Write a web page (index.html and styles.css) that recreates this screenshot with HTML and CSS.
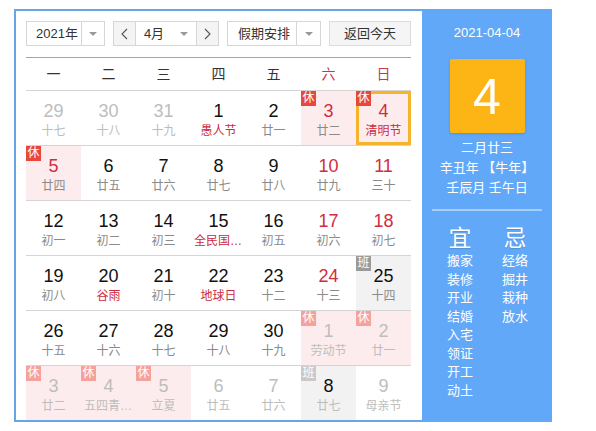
FILE: index.html
```html
<!DOCTYPE html>
<html lang="zh">
<head>
<meta charset="utf-8">
<link rel="stylesheet" href="styles.css">
</head>
<body>
<div class="widget">
  <div class="main">
    <div class="toolbar">
      <div class="sel year"><span class="txt">2021年</span><span class="arr"><i></i></span></div>
      <div class="sel month">
        <span class="nav"><svg width="7" height="12" viewBox="0 0 7 12"><polyline points="6,1 1,6 6,11" fill="none" stroke="#555" stroke-width="1.1"/></svg></span>
        <span class="txt">4月</span>
        <span class="arr plain"><i></i></span>
        <span class="nav r"><svg width="7" height="12" viewBox="0 0 7 12"><polyline points="1,1 6,6 1,11" fill="none" stroke="#555" stroke-width="1.1"/></svg></span>
      </div>
      <div class="sel hol"><span class="txt">假期安排</span><span class="arr"><i></i></span></div>
      <div class="btn">返回今天</div>
    </div>
    <div class="rule"></div>
    <div class="week">
      <span>一</span><span>二</span><span>三</span><span>四</span><span>五</span><span class="we">六</span><span class="we">日</span>
    </div>
    <div class="row">
      <div class="c off"><b>29</b><em>十七</em></div>
      <div class="c off"><b>30</b><em>十八</em></div>
      <div class="c off"><b>31</b><em>十九</em></div>
      <div class="c fest"><b>1</b><em>愚人节</em></div>
      <div class="c"><b>2</b><em>廿一</em></div>
      <div class="c hd red"><span class="tag">休</span><b>3</b><em>廿二</em></div>
      <div class="c hd red fest today"><span class="tag">休</span><b>4</b><em>清明节</em></div>
    </div>
    <div class="row">
      <div class="c hd red"><span class="tag">休</span><b>5</b><em>廿四</em></div>
      <div class="c"><b>6</b><em>廿五</em></div>
      <div class="c"><b>7</b><em>廿六</em></div>
      <div class="c"><b>8</b><em>廿七</em></div>
      <div class="c"><b>9</b><em>廿八</em></div>
      <div class="c red"><b>10</b><em>廿九</em></div>
      <div class="c red"><b>11</b><em>三十</em></div>
    </div>
    <div class="row">
      <div class="c"><b>12</b><em>初一</em></div>
      <div class="c"><b>13</b><em>初二</em></div>
      <div class="c"><b>14</b><em>初三</em></div>
      <div class="c fest"><b>15</b><em>全民国家安全教育日</em></div>
      <div class="c"><b>16</b><em>初五</em></div>
      <div class="c red"><b>17</b><em>初六</em></div>
      <div class="c red"><b>18</b><em>初七</em></div>
    </div>
    <div class="row">
      <div class="c"><b>19</b><em>初八</em></div>
      <div class="c fest"><b>20</b><em>谷雨</em></div>
      <div class="c"><b>21</b><em>初十</em></div>
      <div class="c fest"><b>22</b><em>地球日</em></div>
      <div class="c"><b>23</b><em>十二</em></div>
      <div class="c red"><b>24</b><em>十三</em></div>
      <div class="c wk"><span class="tag ban">班</span><b>25</b><em>十四</em></div>
    </div>
    <div class="row">
      <div class="c"><b>26</b><em>十五</em></div>
      <div class="c"><b>27</b><em>十六</em></div>
      <div class="c"><b>28</b><em>十七</em></div>
      <div class="c"><b>29</b><em>十八</em></div>
      <div class="c"><b>30</b><em>十九</em></div>
      <div class="c hd off"><span class="tag">休</span><b>1</b><em>劳动节</em></div>
      <div class="c hd off"><span class="tag">休</span><b>2</b><em>廿一</em></div>
    </div>
    <div class="row last">
      <div class="c hd off"><span class="tag">休</span><b>3</b><em>廿二</em></div>
      <div class="c hd off"><span class="tag">休</span><b>4</b><em>五四青年节</em></div>
      <div class="c hd off"><span class="tag">休</span><b>5</b><em>立夏</em></div>
      <div class="c off"><b>6</b><em>廿五</em></div>
      <div class="c off"><b>7</b><em>廿六</em></div>
      <div class="c wk off dark"><span class="tag ban">班</span><b>8</b><em>廿七</em></div>
      <div class="c off"><b>9</b><em>母亲节</em></div>
    </div>
  </div>
  <div class="panel">
    <div class="pdate">2021-04-04</div>
    <div class="big">4</div>
    <div class="lunar">
      <div>二月廿三</div>
      <div>辛丑年 【牛年】</div>
      <div>壬辰月 壬午日</div>
    </div>
    <div class="divider"></div>
    <div class="yj">
      <div class="col">
        <div class="h">宜</div>
        <div class="it">搬家</div><div class="it">装修</div><div class="it">开业</div><div class="it">结婚</div>
        <div class="it">入宅</div><div class="it">领证</div><div class="it">开工</div><div class="it">动土</div>
      </div>
      <div class="col">
        <div class="h">忌</div>
        <div class="it">经络</div><div class="it">掘井</div><div class="it">栽种</div><div class="it">放水</div>
      </div>
    </div>
  </div>
</div>
</body>
</html>
```
FILE: styles.css
```css
* { box-sizing: border-box; }
body {
  margin: 0;
  background: #fff;
  font-family: "Liberation Sans", "Noto Sans CJK SC", sans-serif;
  color: #333;
}
.widget {
  display: flex;
  margin: 9px 0 0 14px;
  width: 538px;
  height: 413px;
}
.main {
  width: 408px;
  height: 413px;
  border: 2px solid #68a5e8;
  border-right: none;
  padding: 10px 11px 0 10px;
}
.toolbar {
  display: flex;
  gap: 8px;
  height: 25px;
}
.sel, .btn {
  height: 25px;
  border: 1px solid #d6d6d6;
  display: flex;
  font-size: 13px;
  line-height: 23px;
  color: #333;
  background: #fff;
}
.sel .txt { flex: 1; }
.year { width: 79px; }
.year .txt { padding-left: 9px; }
.sel .arr {
  width: 23px;
  border-left: 1px solid #d6d6d6;
  display: flex;
  align-items: center;
  justify-content: center;
}
.sel .arr.plain { border-left: none; width: 24px; }
.sel .arr i {
  display: block;
  width: 0;
  height: 0;
  border-left: 4px solid transparent;
  border-right: 4px solid transparent;
  border-top: 4px solid #999;
}
.month { width: 106px; }
.month .nav {
  width: 22px;
  background: #f4f4f4;
  border-right: 1px solid #d6d6d6;
  display: flex;
  align-items: center;
  justify-content: center;
}
.month .nav.r { border-right: none; border-left: 1px solid #d6d6d6; }
.month .txt { text-align: center; }
.hol { width: 94px; }
.hol .txt { padding-left: 10px; }
.hol .arr { width: 24px; }
.btn {
  width: 82px;
  justify-content: center;
  background: #f5f5f5;
  border-color: #dcdcdc;
}
.rule {
  height: 1px;
  background: #78ade6;
  margin-top: 11px;
}
.week {
  display: grid;
  grid-template-columns: repeat(7, 55px);
  height: 33px;
  line-height: 32px;
  text-align: center;
  font-size: 14px;
  color: #333;
  border-bottom: 1px solid #d4d4d4;
}
.week .we { color: #c8374a; }
.row {
  display: grid;
  grid-template-columns: repeat(7, 55px);
  height: 55px;
  border-bottom: 1px solid #d4d4d4;
}
.row.last { border-bottom: none; height: 54px; }
.c {
  position: relative;
  text-align: center;
  padding-top: 9px;
}
.c b {
  display: block;
  font-weight: normal;
  font-size: 18px;
  line-height: 22px;
  color: #111;
}
.c em {
  display: block;
  font-style: normal;
  font-size: 12px;
  line-height: 18px;
  color: #8a8a8a;
  white-space: nowrap;
  overflow: hidden;
  text-overflow: ellipsis;
  padding: 0 3px;
}
.c.red b { color: #d12d40; }
.c.fest em { color: #cc2b3e; }
.c.hd { background: #fdeced; }
.c.wk { background: #f2f2f2; }
.c.today { box-shadow: inset 0 0 0 3px #f6b42a; }
.tag {
  position: absolute;
  left: 0;
  top: 0;
  width: 15px;
  height: 15px;
  background: #e8473b;
  color: #fff;
  font-size: 12px;
  line-height: 15px;
  text-align: center;
}
.tag.ban { background: #9a9a9a; }
.c.off b, .c.off em { color: #bdbdbd; }
.c.off .tag { background: #f5a29c; }
.c.off .tag.ban { background: #c9c9c9; }
.c.off.dark b { color: #111; }
.panel {
  width: 130px;
  height: 413px;
  background: #62a8f8;
  color: #fff;
  text-align: center;
}
.pdate {
  padding-top: 14px;
  font-size: 13px;
  line-height: 20px;
}
.big {
  width: 75px;
  height: 74px;
  margin: 16px auto 0;
  background: #fdb516;
  border-radius: 2px;
  box-shadow: 0 1px 3px rgba(0, 0, 0, 0.15);
  font-size: 50px;
  line-height: 72px;
  padding-top: 2px;
}
.lunar {
  margin-top: 5px;
  font-size: 13px;
  line-height: 20px;
}
.divider {
  height: 2px;
  margin: 11px 10px 0;
  background: rgba(255, 255, 255, 0.45);
}
.yj {
  display: flex;
  gap: 5px;
  padding-left: 13px;
  margin-top: 13px;
}
.yj .col { width: 50px; }
.yj .h {
  font-size: 23px;
  line-height: 28px;
  text-shadow: 0 1px 1px rgba(0, 0, 0, 0.15);
}
.yj .it {
  font-size: 13px;
  line-height: 18.5px;
}
```
